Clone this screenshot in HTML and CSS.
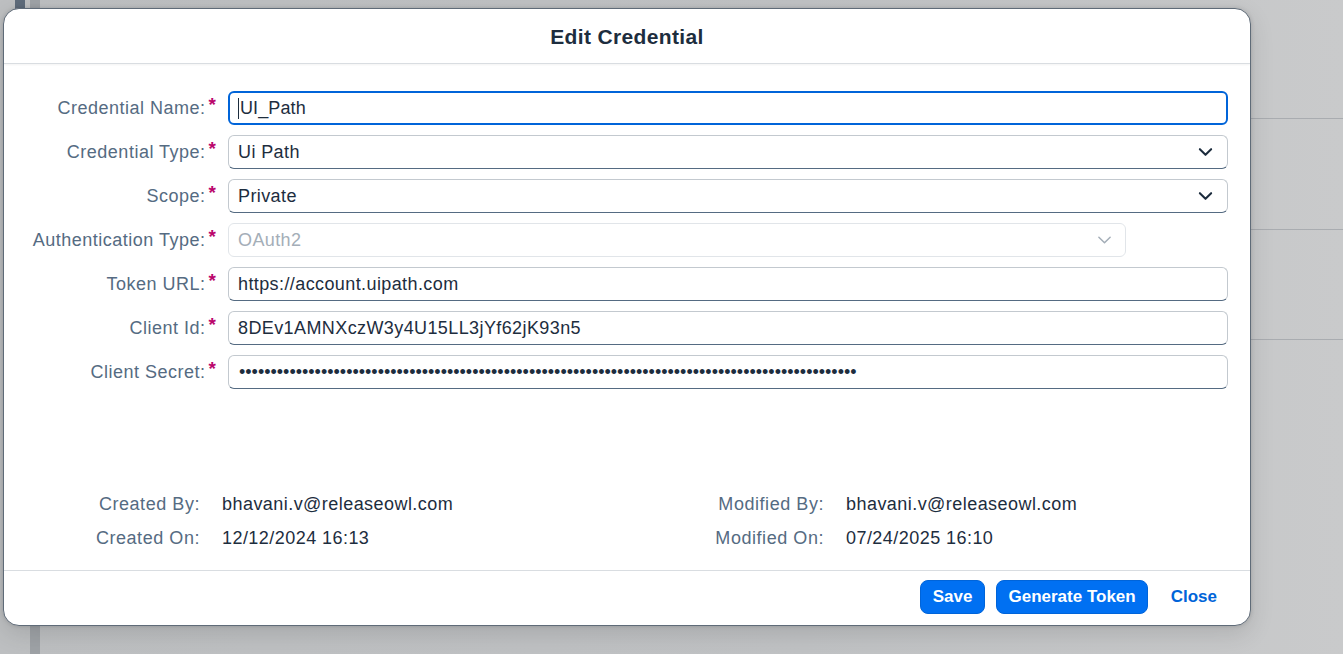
FILE: index.html
```html
<!DOCTYPE html>
<html lang="en">
<head>
<meta charset="utf-8">
<title>Edit Credential</title>
<link rel="stylesheet" href="styles.css">
</head>
<body>
<div class="backdrop">
  <div class="bg-gutter"></div>
  <div class="bg-strip-dark"></div>
  <div class="bg-gap"></div>
  <div class="bg-strip-light"></div>
  <div class="bg-main">
    <div class="bg-row r1"></div>
    <div class="bg-row r2"></div>
    <div class="bg-row r3"></div>
  </div>
</div>

<div class="dialog" role="dialog" aria-label="Edit Credential">
  <header class="dlg-header"><h1 class="dlg-title">Edit Credential</h1></header>

  <section class="dlg-body">
    <div class="form">
      <label class="lbl">Credential Name:<span class="req">*</span></label>
      <div class="field focused"><span class="caret"></span>UI_Path</div>

      <label class="lbl">Credential Type:<span class="req">*</span></label>
      <div class="field select"><span>Ui Path</span><svg class="chev" viewBox="0 0 16 10"><polyline points="2,2 8,8 14,2"/></svg></div>

      <label class="lbl">Scope:<span class="req">*</span></label>
      <div class="field select"><span>Private</span><svg class="chev" viewBox="0 0 16 10"><polyline points="2,2 8,8 14,2"/></svg></div>

      <label class="lbl">Authentication Type:<span class="req">*</span></label>
      <div class="field select disabled"><span>OAuth2</span><svg class="chev" viewBox="0 0 16 10"><polyline points="2,2 8,8 14,2"/></svg></div>

      <label class="lbl">Token URL:<span class="req">*</span></label>
      <div class="field">https://account.uipath.com</div>

      <label class="lbl">Client Id:<span class="req">*</span></label>
      <div class="field">8DEv1AMNXczW3y4U15LL3jYf62jK93n5</div>

      <label class="lbl">Client Secret:<span class="req">*</span></label>
      <div class="field secret">••••••••••••••••••••••••••••••••••••••••••••••••••••••••••••••••••••••••••••••••••••••••••••••••••</div>
    </div>

    <div class="meta">
      <span class="m-lbl">Created By:</span><span class="m-val">bhavani.v@releaseowl.com</span>
      <span class="m-lbl">Modified By:</span><span class="m-val">bhavani.v@releaseowl.com</span>
      <span class="m-lbl">Created On:</span><span class="m-val">12/12/2024 16:13</span>
      <span class="m-lbl">Modified On:</span><span class="m-val">07/24/2025 16:10</span>
    </div>
  </section>

  <footer class="dlg-footer">
    <button class="btn primary">Save</button>
    <button class="btn primary">Generate Token</button>
    <button class="btn ghost">Close</button>
  </footer>
</div>
</body>
</html>
```

FILE: styles.css
```css
* { box-sizing: border-box; }
html, body { margin: 0; padding: 0; height: 100%; }
body {
  font-family: "Liberation Sans", Arial, sans-serif;
  color: #1d2d3e;
  overflow: hidden;
  background: #c2c3c5;
}

/* background app (dimmed) */
.backdrop {
  display: flex;
  height: 654px;
  background: linear-gradient(90deg, #bdbfc1 0%, #c0c2c4 60%, #c9cacb 100%);
}
.bg-gutter { width: 15px; }
.bg-strip-dark { width: 10px; background: linear-gradient(180deg, #5e6b7a 0, #5e6b7a 12px, transparent 12px); }
.bg-gap { width: 5px; }
.bg-strip-light { width: 10px; background-color: #9ea2a6; }
.bg-main { flex: 1; display: flex; flex-direction: column; }
.bg-row { border-bottom: 1px solid #a9acb0; }
.r1 { height: 119px; }
.r2 { height: 111px; }
.r3 { height: 110px; }

/* dialog */
.dialog {
  position: absolute;
  left: 3px;
  top: 8px;
  width: 1248px;
  height: 618px;
  background: #fff;
  border: 1px solid #5f6b78;
  border-radius: 16px;
  box-shadow: 0 0 4px rgba(0,0,0,0.15), 0 8px 24px rgba(0,0,0,0.12);
  display: flex;
  flex-direction: column;
  overflow: hidden;
}
.dlg-header {
  height: 55px;
  border-bottom: 1px solid #d9dde1;
  box-shadow: 0 1px 2px rgba(0,0,0,0.05);
  display: flex;
  align-items: center;
  justify-content: center;
}
.dlg-title {
  margin: 0;
  font-size: 21px;
  font-weight: bold;
  color: #1d2d3e;
  letter-spacing: 0.35px;
  padding-top: 1px;
}

.dlg-body {
  flex: 1;
  padding-top: 27px;
}
.form {
  display: grid;
  grid-template-columns: 212px 1000px;
  column-gap: 12px;
  row-gap: 10px;
}
.lbl {
  display: flex;
  justify-content: flex-end;
  align-items: center;
  font-size: 18px;
  color: #556b82;
  letter-spacing: 0.5px;
  height: 34px;
}
.req {
  color: #ba066c;
  font-weight: bold;
  margin-left: 3px;
  font-size: 19px;
  position: relative;
  top: -3px;
  letter-spacing: 0;
}
.field {
  height: 34px;
  border: 1px solid #c3c9cf;
  border-bottom-color: #556b82;
  border-radius: 6px;
  padding: 0 10px 0 9px;
  display: flex;
  align-items: center;
  font-size: 18px;
  color: #1d2d3e;
  letter-spacing: 0.4px;
  background: #fff;
}
.field.focused {
  border: 2px solid #0064d9;
  padding-left: 8px;
  letter-spacing: 0.1px;
}
.caret {
  display: inline-block;
  width: 1px;
  height: 21px;
  background: #1d2d3e;
  margin-right: 1px;
}
.field.select { justify-content: space-between; padding-right: 14px; }
.chev { width: 15px; height: 10px; fill: none; stroke: #1d2d3e; stroke-width: 2.2; stroke-linecap: round; stroke-linejoin: round; }
.field.disabled {
  width: 898px;
  border-color: #e1e5e9;
  color: #a4aeb8;
  padding-right: 13px;
}
.field.disabled .chev { stroke: #a4aeb8; stroke-width: 1.6; }
.field.secret { letter-spacing: 0; font-size: 18px; overflow: hidden; white-space: nowrap; padding-left: 10px; }

.meta {
  margin-top: 103px;
  display: grid;
  grid-template-columns: 196px 380px 200px auto;
  column-gap: 22px;
  row-gap: 10px;
  font-size: 18px;
  line-height: 24px;
}
.m-lbl { text-align: right; color: #556b82; letter-spacing: 0.55px; }
.m-val { color: #1d2d3e; letter-spacing: 0.45px; }

.dlg-footer {
  height: 55px;
  border-top: 1px solid #d9dde1;
  display: flex;
  justify-content: flex-end;
  align-items: flex-start;
  gap: 11px;
  padding: 9px 21px 0 0;
}
.btn {
  height: 34px;
  border-radius: 8px;
  border: none;
  font-family: "Liberation Sans", Arial, sans-serif;
  font-size: 17px;
  font-weight: bold;
  padding: 0 11px;
  cursor: pointer;
}
.btn.primary { background: #0070f2; color: #fff; border: 1px solid #0064d9; }
.btn.primary:first-child { padding: 0 12px; }
.btn.ghost { background: transparent; color: #0064d9; padding: 0 12px; }
```
